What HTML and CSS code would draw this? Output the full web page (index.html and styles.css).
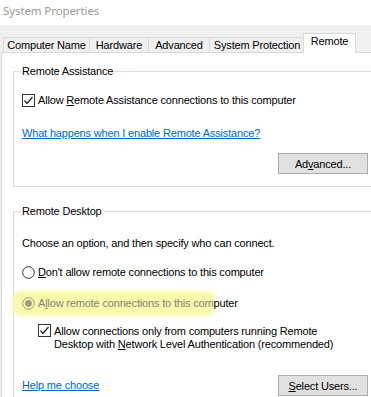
FILE: index.html
```html
<!DOCTYPE html>
<html lang="en">
<head>
    <meta charset="UTF-8">
    <title>System Properties</title>
    <link rel="stylesheet" href="styles.css">
</head>
<body>
    <div class="window">
        <div class="titlebar">System Properties</div>
        <div class="client">
            <div class="tabs">
                <div class="tab tab-name">Computer Name</div>
                <div class="tab tab-hw">Hardware</div>
                <div class="tab tab-adv">Advanced</div>
                <div class="tab tab-sys">System Protection</div>
                <div class="tab tab-remote active">Remote</div>
            </div>
            <div class="panel">
                <fieldset class="group group-assist">
                    <legend>Remote Assistance</legend>
                    <div class="row check-row">
                        <svg class="box" width="13" height="13" viewBox="0 0 13 13"><rect x="0.5" y="0.5" width="12" height="12" fill="#fff" stroke="#333"/><path d="M2.5 6.5 L5 9.5 L10.5 3" fill="none" stroke="#222" stroke-width="1.2"/></svg>
                        <span>Allow <u>R</u>emote Assistance connections to this computer</span>
                    </div>
                    <a class="link link-assist" href="#">What happens when I enable Remote Assistance?</a>
                    <div class="btn-row btn-row-adv">
                        <button class="btn">Ad<u>v</u>anced...</button>
                    </div>
                </fieldset>

                <fieldset class="group group-desktop">
                    <legend>Remote Desktop</legend>
                    <p class="intro">Choose an option, and then specify who can connect.</p>
                    <div class="row radio-row radio-off">
                        <svg class="radio" width="13" height="13" viewBox="0 0 13 13"><circle cx="6.5" cy="6.5" r="5.8" fill="#fff" stroke="#333"/></svg>
                        <span><u>D</u>on't allow remote connections to this computer</span>
                    </div>
                    <div class="row radio-row radio-on">
                        <span class="marker">
                            <svg class="radio" width="13" height="13" viewBox="0 0 13 13"><circle cx="6.5" cy="6.5" r="5.8" fill="none" stroke="#9a9a7a"/><circle cx="6.5" cy="6.5" r="3.4" fill="#9c9c80"/></svg>
                            <span class="faded">A<u>l</u>low remote connections to this com</span></span><span>puter</span>
                    </div>
                    <div class="row check-row nla-row">
                        <svg class="box" width="13" height="13" viewBox="0 0 13 13"><rect x="0.5" y="0.5" width="12" height="12" fill="#fff" stroke="#333"/><path d="M2.5 6.5 L5 9.5 L10.5 3" fill="none" stroke="#222" stroke-width="1.2"/></svg>
                        <span>Allow connections only from computers running Remote<br>Desktop with <u>N</u>etwork Level Authentication (recommended)</span>
                    </div>
                    <div class="btn-row btn-row-users">
                        <a class="link" href="#">Help me choose</a>
                        <button class="btn"><u>S</u>elect Users...</button>
                    </div>
                </fieldset>
            </div>
        </div>
    </div>
</body>
</html>
```

FILE: styles.css
```css
html, body {
    margin: 0;
    padding: 0;
    overflow: hidden;
}
body {
    width: 371px;
    height: 397px;
    font-family: "Liberation Sans", Arial, sans-serif;
    font-size: 11px;
    line-height: 13px;
    letter-spacing: -0.17px;
    color: #000;
}
.window {
    width: 371px;
    height: 397px;
    background: #f0f0f0;
    overflow: hidden;
}
.titlebar {
    height: 25px;
    background: #fff;
    color: #9a9a9a;
    font-family: "Noto Sans", "Open Sans", sans-serif;
    font-size: 11.5px;
    letter-spacing: -0.1px;
    line-height: 21px;
    padding-left: 3px;
    box-sizing: border-box;
}
.client {
    padding-top: 8px;
}
.tabs {
    display: flex;
    align-items: flex-end;
    height: 19px;
    padding-left: 3px;
}
.tab {
    box-sizing: border-box;
    height: 15px;
    border: 1px solid #d9d9d9;
    border-bottom: none;
    margin-right: -1px;
    background: #f0f0f0;
    text-align: center;
    line-height: 14px;
}
.tab-name { width: 87px; }
.tab-hw { width: 60px; }
.tab-adv { width: 62px; }
.tab-sys { width: 96px; }
.tab-remote { width: 53px; }
.tab.active {
    position: relative;
    z-index: 1;
    height: 20px;
    margin-left: -1px;
    margin-bottom: -1px;
    background: #fff;
    line-height: 15px;
}
.panel {
    margin-left: 1px;
    height: 350px;
    background: #fff;
    border: 1px solid #d9d9d9;
    border-right: none;
    padding-top: 12px;
    box-sizing: border-box;
}
.group {
    margin: 0 0 0 11px;
    width: 358px;
    box-sizing: border-box;
    border: 1px solid #dcdcdc;
    border-right: none;
    padding: 0 3px 12px 8px;
    min-width: 0;
}
.group legend {
    padding: 0 1px;
    margin-left: -1px;
    line-height: 13px;
}
.group-desktop {
    margin-top: 18px;
}
.row {
    display: flex;
    align-items: center;
    height: 13px;
}
.row svg {
    flex: none;
    margin-right: 3px;
}
.check-row {
    margin-top: 16px;
}
.link {
    display: block;
    color: #0066cc;
    text-decoration: underline;
    width: max-content;
}
.link-assist {
    margin-top: 20px;
}
.btn-row {
    display: flex;
    align-items: center;
    justify-content: space-between;
}
.btn-row-adv {
    justify-content: flex-end;
    margin-top: 13px;
}
.btn {
    width: 90px;
    height: 21px;
    padding: 0;
    background: #e1e1e1;
    border: 1px solid #adadad;
    border-radius: 0;
    font-family: inherit;
    font-size: 11px;
    letter-spacing: -0.17px;
    color: #000;
}
.intro {
    margin: 19px 0 0;
}
.radio-off {
    margin-top: 16px;
}
.radio-on {
    margin-top: 18px;
}
.marker {
    display: flex;
    align-items: center;
    background: #f9f9ac;
    box-shadow: 0 0 4px 2px #f9f9ac;
    border-radius: 6px;
    padding: 4px 0 4px 7px;
    margin: -4px 0 -4px -7px;
}
.faded {
    color: #858575;
}
.nla-row {
    margin-top: 15px;
    height: auto;
    align-items: flex-start;
    padding-left: 16px;
}
.nla-row svg {
    margin-top: -1px;
}
.btn-row-users {
    margin-top: 24px;
}
```
